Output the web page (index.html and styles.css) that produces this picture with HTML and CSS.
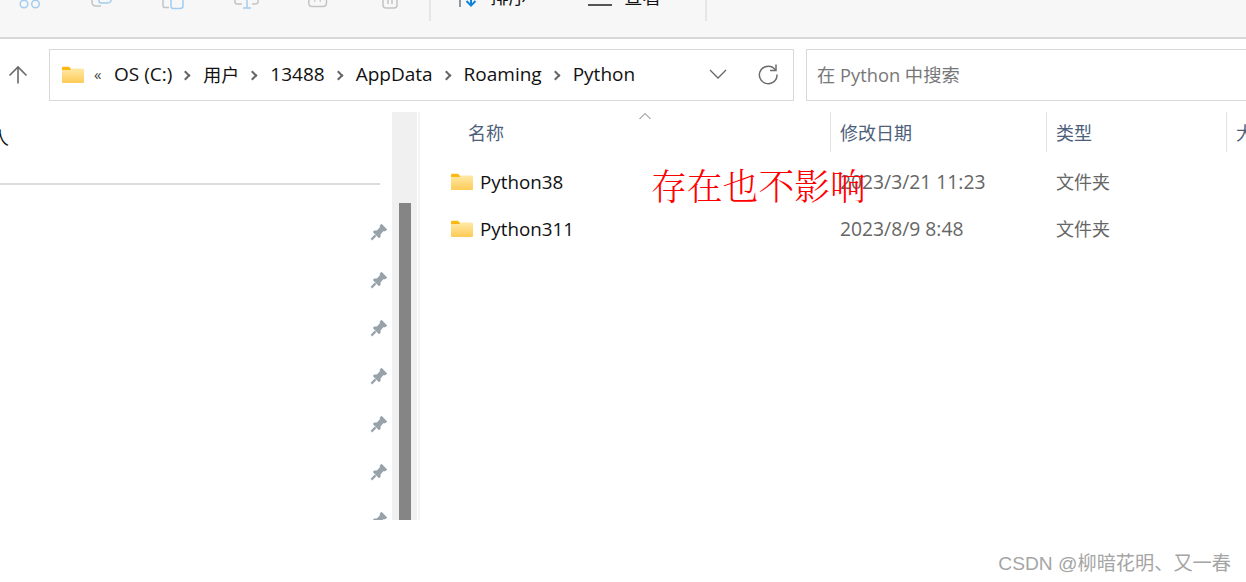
FILE: index.html
```html
<!DOCTYPE html>
<html lang="zh-CN">
<head>
    <meta charset="UTF-8">
    <title>Python - 文件资源管理器</title>
    <link rel="stylesheet" href="styles.css">
</head>
<body>
    <svg class="sprites" width="0" height="0">
        <defs>
            <symbol id="pin" viewBox="0 0 18 18">
                <path d="M11.500 0.800 L17.200 6.500 L15.200 8.200 L13.400 8.200 L10.600 11.200 L10.600 13.800 L9 15.200 L2.800 9 L4.200 7.400 L6.800 7.400 L9.800 4.400 L9.800 2.600 Z" fill="#98a2aa"/>
                <path d="M5.600 12.400 L1.400 16.600" stroke="#98a2aa" stroke-width="2.200" fill="none"/>
            </symbol>
            <symbol id="folder" viewBox="0 0 22 18">
                <path d="M0 2 Q0 0.8 1.2 0.8 H7 L9 2.8 V5 H0 Z" fill="#fdb813"/>
                <path d="M0 4 H8.5 L10 2.6 H20.8 Q22 2.6 22 3.8 V16 Q22 17 21 17 H1 Q0 17 0 16 Z" fill="url(#folderfill)"/>
            </symbol>
            <linearGradient id="folderfill" x1="0" y1="0" x2="0" y2="1">
                <stop offset="0" stop-color="#ffe9a6"/>
                <stop offset="1" stop-color="#fdcb56"/>
            </linearGradient>
        </defs>
    </svg>

    <div class="ribbon">
        <div class="ribbon-tools">
            <svg class="tool-icon" width="24" height="10" viewBox="0 0 24 10"><circle cx="6" cy="4" r="3.800"/><circle cx="17.500" cy="4" r="3.800"/></svg>
            <svg class="tool-icon" width="24" height="10" viewBox="0 0 24 10"><path class="grey-line" d="M2 0 V2 Q2 6 6 6 H11"/><path d="M9 0 V1 Q9 3 11 3 H18 Q20 3 21 1 V0"/></svg>
            <svg class="tool-icon" width="24" height="10" viewBox="0 0 24 10"><path class="grey-line" d="M1 0 V5 Q1 7.500 3 7.500 H7"/><path d="M9 0 V6 Q9 8.500 11 8.500 H18 Q21 8.500 21 6 V0"/></svg>
            <svg class="tool-icon" width="26" height="10" viewBox="0 0 26 10"><path class="grey-line" d="M1 0 V2 Q1 4 3 4 H8"/><path class="grey-line" d="M18 4 H21 Q24 4 24 2 V0"/><path d="M13 0 V8 M9 8 H17"/></svg>
            <svg class="tool-icon" width="24" height="10" viewBox="0 0 24 10"><path class="grey-line" d="M0.800 0 V3 Q0.800 6.500 4 6.500 H15 Q18.500 6.500 18.500 3 V0"/><path class="grey-line" d="M6 1 H7.500 M11.500 1 H13"/></svg>
            <svg class="tool-icon tool-last" width="20" height="10" viewBox="0 0 20 10"><path class="grey-line" d="M3 0 V5 Q3 8 6 8 H14 Q17 8 17 5 V0"/><path class="grey-line" d="M8 0 V4 M12 0 V4"/></svg>
            <span class="ribbon-sep"></span>
            <span class="ribbon-cmd sort">
                <svg width="22" height="10" viewBox="0 0 22 10"><path d="M2 0 V7" stroke="#6b7680" stroke-width="1.500" fill="none"/><path d="M13 0 V5 M8.500 1 L13 5.500 L17.500 1" stroke="#0f84d8" stroke-width="2" fill="none"/></svg>
                <span class="ribbon-label">排序</span>
            </span>
            <span class="ribbon-cmd view">
                <span class="view-lines"></span>
                <span class="ribbon-label">查看</span>
            </span>
            <span class="ribbon-sep"></span>
        </div>
    </div>

    <div class="address-row">
        <svg class="up-arrow" width="20" height="20" viewBox="0 0 20 20"><path d="M10 18.500 V2.500 M1.500 10.500 L10 2 L18.500 10.500" fill="none" stroke="#6a6a6a" stroke-width="1.600"/></svg>
        <div class="address-box">
            <svg class="crumb-folder" width="22" height="18"><use href="#folder"/></svg>
            <span class="crumb-more">«</span>
            <span class="crumb">OS (C:)</span><span class="chev"></span>
            <span class="crumb crumb-cjk">用户</span><span class="chev"></span>
            <span class="crumb">13488</span><span class="chev"></span>
            <span class="crumb">AppData</span><span class="chev"></span>
            <span class="crumb">Roaming</span><span class="chev"></span>
            <span class="crumb">Python</span>
            <span class="address-tools">
                <svg width="18" height="10" viewBox="0 0 18 10"><path d="M1 1 L9 9 L17 1" fill="none" stroke="#666" stroke-width="1.300"/></svg>
                <svg width="22" height="22" viewBox="0 0 22 22"><path d="M18.500 7 A8.800 8.800 0 1 0 20 11.500" fill="none" stroke="#6c6c6c" stroke-width="1.500"/><path d="M19 1.500 V7.500 H13" fill="none" stroke="#6c6c6c" stroke-width="1.500"/></svg>
            </span>
        </div>
        <div class="search-box">在 Python 中搜索</div>
    </div>

    <div class="main">
        <aside class="sidebar">
            <div class="nav-pane">
                <div class="nav-top">人</div>
                <div class="nav-rule"></div>
                <div class="pins">
                    <svg width="18" height="18"><use href="#pin"/></svg>
                    <svg width="18" height="18"><use href="#pin"/></svg>
                    <svg width="18" height="18"><use href="#pin"/></svg>
                    <svg width="18" height="18"><use href="#pin"/></svg>
                    <svg width="18" height="18"><use href="#pin"/></svg>
                    <svg width="18" height="18"><use href="#pin"/></svg>
                    <svg width="18" height="18"><use href="#pin"/></svg>
                </div>
            </div>
            <div class="scrollbar"><div class="scroll-thumb"></div></div>
        </aside>

        <section class="files">
            <svg class="sort-caret" width="14" height="8" viewBox="0 0 14 8"><path d="M1.500 7 L7 1.500 L12.500 7" fill="none" stroke="#777" stroke-width="1"/></svg>
            <div class="file-head">
                <div class="col col-name">名称</div>
                <div class="col col-date">修改日期</div>
                <div class="col col-type">类型</div>
                <div class="col col-size">大小</div>
            </div>
            <div class="file-row">
                <div class="col-name name-cell"><svg width="22" height="18"><use href="#folder"/></svg>Python38</div>
                <div class="col-date">2023/3/21 11:23</div>
                <div class="col-type">文件夹</div>
            </div>
            <div class="file-row">
                <div class="col-name name-cell"><svg width="22" height="18"><use href="#folder"/></svg>Python311</div>
                <div class="col-date">2023/8/9 8:48</div>
                <div class="col-type">文件夹</div>
            </div>
            <div class="note">存在也不影响</div>
        </section>
    </div>

    <div class="watermark">CSDN @柳暗花明、又一春</div>
</body>
</html>
```

FILE: styles.css
```css
* {
    margin: 0;
    padding: 0;
    box-sizing: border-box;
}

html, body {
    height: 582px;
    overflow: hidden;
}

body {
    position: relative;
    background: white;
    font-family: "Open Sans", "Noto Sans CJK SC", sans-serif;
    font-size: 18.8px;
    color: #111;
}

.sprites {
    position: absolute;
}

/* ribbon, cut off by the top of the picture */
.ribbon {
    height: 39px;
    background: #f7f7f7;
    border-bottom: 2px solid #d8d8d8;
    overflow: hidden;
}

.ribbon-tools {
    display: flex;
    align-items: flex-start;
    height: 37px;
    padding-left: 18px;
}

.tool-icon {
    margin-right: 48px;
    fill: none;
    stroke: #a3cdf0;
    stroke-width: 1.5;
    flex: none;
}

.tool-icon .grey-line {
    stroke: #c2c4c6;
}

.tool-icon.tool-last {
    margin-right: 29px;
}

.ribbon-sep {
    width: 2px;
    height: 21px;
    background: #e6e6e6;
    flex: none;
}

.ribbon-cmd {
    display: flex;
    align-items: flex-start;
    flex: none;
}

.ribbon-label {
    font-size: 18.5px;
    line-height: 18px;
    margin-top: -12px;
}

.sort {
    margin-left: 27px;
    width: 130px;
    gap: 10px;
}

.view {
    width: 117px;
    gap: 12px;
}

.view-lines {
    display: block;
    width: 24px;
    height: 2px;
    background: #555;
    margin-top: 4px;
}

/* address row */
.address-row {
    display: flex;
    align-items: center;
    height: 52px;
    margin-top: 10px;
}

.up-arrow {
    margin-left: 8px;
    margin-right: 21px;
    flex: none;
}

.address-box {
    display: flex;
    align-items: center;
    width: 745px;
    height: 52px;
    border: 1px solid #d9d9d9;
    padding: 0 0 2px 12px;
    flex: none;
}

.crumb-folder {
    margin-right: 10px;
    margin-top: 1px;
}

.crumb-more {
    font-size: 15px;
    color: #444;
    width: 20px;
}

.crumb {
    font-size: 19px;
}

.crumb-cjk {
    font-size: 18px;
}

.chev {
    width: 7px;
    height: 7px;
    border-top: 2px solid #666;
    border-right: 2px solid #666;
    transform: rotate(45deg);
    margin: 2px 14px 0 10px;
}

.address-tools {
    display: flex;
    align-items: center;
    gap: 30px;
    margin-left: auto;
    margin-right: 14px;
}

.search-box {
    margin-left: 12px;
    flex: 1;
    height: 52px;
    line-height: 50px;
    border: 1px solid #d9d9d9;
    border-right: 0;
    padding-left: 10px;
    font-size: 18.3px;
    color: #777;
}

/* left pane + file list */
.main {
    display: flex;
    height: 408px;
    margin-top: 11px;
}

.sidebar {
    display: flex;
    width: 420px;
    flex: none;
    border-right: 2px solid #f3f3f3;
}

.nav-pane {
    width: 392px;
    overflow: hidden;
}

.nav-top {
    height: 48px;
    line-height: 52px;
    margin-left: -9px;
    font-size: 18px;
}

.nav-rule {
    width: 380px;
    height: 2px;
    background: #dcdcdc;
    margin-top: 23px;
}

.pins {
    display: flex;
    flex-direction: column;
    gap: 30px;
    align-items: flex-end;
    padding-right: 4px;
    margin-top: 38px;
}

.pins svg {
    flex: none;
}

.scrollbar {
    width: 25px;
    background: #f0f0f0;
    padding: 91px 6px 0 7px;
}

.scroll-thumb {
    height: 100%;
    background: #858585;
}

.files {
    position: relative;
    flex: 1;
    overflow: hidden;
}

.sort-caret {
    position: absolute;
    left: 218px;
    top: 0;
}

.file-head, .file-row {
    display: grid;
    grid-template-columns: 410px 216px 180px 40px;
}

.file-head {
    height: 40px;
    color: #4c607a;
    font-size: 18px;
    line-height: 42px;
}

.col {
    border-left: 1px solid #e2e2e2;
    padding-left: 9px;
    height: 40px;
    white-space: nowrap;
}

.col-name.col {
    border-left: 0;
    padding-left: 48px;
}

.file-row {
    height: 47px;
    align-items: center;
    color: #666;
}

.file-head + .file-row {
    margin-top: 6px;
}

.file-row .col-date {
    padding-left: 10px;
    font-size: 19.3px;
}

.file-row .col-type {
    padding-left: 10px;
    padding-bottom: 2px;
    font-size: 18px;
}

.name-cell {
    display: flex;
    align-items: center;
    gap: 7px;
    padding-left: 31px;
    color: #111;
}

.note {
    position: absolute;
    left: 231px;
    top: 49px;
    font-family: "Noto Serif CJK SC", "Noto Sans CJK SC", serif;
    font-size: 35.8px;
    font-weight: 300;
    line-height: 48px;
    color: #f00;
    white-space: nowrap;
}

.watermark {
    position: absolute;
    right: 15px;
    bottom: 6px;
    font-family: "Liberation Sans", "Noto Sans CJK SC", sans-serif;
    font-size: 19.2px;
    color: #a5a5a5;
}
```
